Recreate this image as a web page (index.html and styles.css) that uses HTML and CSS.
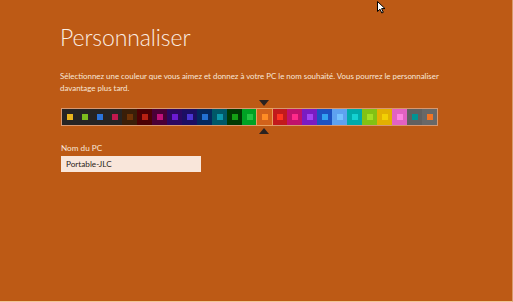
FILE: index.html
```html
<!DOCTYPE html>
<html lang="fr">
<head>
  <meta charset="UTF-8">
  <title>Personnaliser</title>
  <link rel="stylesheet" href="styles.css">
</head>
<body>
  <div class="screen">
    <svg class="cursor" width="9" height="13" viewBox="0 0 9 13">
      <path d="M0.5 0.5 L0.5 10.5 L3 8.2 L4.8 12 L6.3 11.3 L4.6 7.6 L8 7.6 Z" fill="#fff" stroke="#000" stroke-width="1"/>
    </svg>

    <h1>Personnaliser</h1>
    <p class="intro">Sélectionnez une couleur que vous aimez et donnez à votre PC le nom souhaité. Vous pourrez le personnaliser davantage plus tard.</p>

    <div class="picker">
      <div class="swatch" style="background:#262424"><i style="background:#e8b41e"></i></div>
      <div class="swatch" style="background:#262424"><i style="background:#7cbc1e"></i></div>
      <div class="swatch" style="background:#262424"><i style="background:#2b74dc"></i></div>
      <div class="swatch" style="background:#262424"><i style="background:#c0184e"></i></div>
      <div class="swatch" style="background:#3a1e08"><i style="background:#6e3206"></i></div>
      <div class="swatch" style="background:#4c0004"><i style="background:#b82012"></i></div>
      <div class="swatch" style="background:#4a0036"><i style="background:#c0107a"></i></div>
      <div class="swatch" style="background:#2c0860"><i style="background:#6c1ad2"></i></div>
      <div class="swatch" style="background:#1c0e62"><i style="background:#4a34d2"></i></div>
      <div class="swatch" style="background:#04285e"><i style="background:#2270d2"></i></div>
      <div class="swatch" style="background:#005868"><i style="background:#0c98ac"></i></div>
      <div class="swatch" style="background:#013a04"><i style="background:#14a014"></i></div>
      <div class="swatch" style="background:#00a224"><i style="background:#24c444"></i></div>
      <div class="swatch selected" style="background:#d2621a"><i style="background:#ff8c24"></i></div>
      <div class="swatch" style="background:#c21a1c"><i style="background:#ff3422"></i></div>
      <div class="swatch" style="background:#c0126c"><i style="background:#ff2a8a"></i></div>
      <div class="swatch" style="background:#7a1cc2"><i style="background:#a444f2"></i></div>
      <div class="swatch" style="background:#1c52c2"><i style="background:#32a2f2"></i></div>
      <div class="swatch" style="background:#5ea2f0"><i style="background:#74c2ff"></i></div>
      <div class="swatch" style="background:#00aaaa"><i style="background:#14d2d2"></i></div>
      <div class="swatch" style="background:#82c214"><i style="background:#a2de24"></i></div>
      <div class="swatch" style="background:#e2b002"><i style="background:#f2d004"></i></div>
      <div class="swatch" style="background:#e262c2"><i style="background:#ff84e2"></i></div>
      <div class="swatch" style="background:#606060"><i style="background:#009494"></i></div>
      <div class="swatch" style="background:#686868"><i style="background:#f27424"></i></div>
    </div>

    <label class="field-label" for="pcName">Nom du PC</label>
    <input class="field" id="pcName" type="text" value="Portable-JLC">
  </div>
</body>
</html>
```

FILE: styles.css
```css
html,
body {
  margin: 0;
  padding: 0;
}

body {
  width: 513px;
  height: 302px;
  overflow: hidden;
  background: #bd5a15;
  font-family: Lato, "Open Sans", sans-serif;
}

.screen {
  position: relative;
  box-sizing: border-box;
  height: 302px;
  padding: 22px 0 0 60px;
  border-right: 1px solid #d89a6a;
  border-bottom: 1px solid #f0c898;
}

.cursor {
  position: absolute;
  top: 1px;
  left: 377px;
}

h1 {
  margin: 0;
  font-family: Lato, "Open Sans", sans-serif;
  font-weight: 300;
  font-size: 23px;
  line-height: 30px;
  letter-spacing: -0.1px;
  color: #fbeee4;
}

.intro {
  margin: 18px 0 0;
  width: 400px;
  font-size: 7.9px;
  line-height: 12px;
  color: #f8e6d8;
}

.picker {
  display: flex;
  width: 375px;
  height: 16px;
  margin: 15px 0 0 2px;
  outline: 1px solid #d89870;
}

.swatch {
  position: relative;
  flex: 1;
  display: flex;
  align-items: center;
  justify-content: center;
}

.swatch i {
  width: 6px;
  height: 6px;
}

.swatch.selected {
  outline: 1px solid #e8a060;
  z-index: 1;
}

.swatch.selected::before,
.swatch.selected::after {
  content: "";
  position: absolute;
  left: 2px;
  border-left: 5px solid transparent;
  border-right: 5px solid transparent;
}

.swatch.selected::before {
  top: -9px;
  border-top: 6px solid #2a2220;
}

.swatch.selected::after {
  bottom: -9px;
  border-bottom: 6px solid #2a2220;
}

.field-label {
  display: block;
  margin: 17px 0 0 1px;
  font-size: 8.2px;
  line-height: 12px;
  color: #f8e6d8;
}

.field {
  display: block;
  box-sizing: border-box;
  width: 140px;
  height: 16px;
  margin: 2px 0 0 1px;
  padding: 0 5px;
  border: none;
  background: #f9e6da;
  font-family: Lato, "Open Sans", sans-serif;
  font-size: 8.2px;
  color: #2a1c16;
}
```
